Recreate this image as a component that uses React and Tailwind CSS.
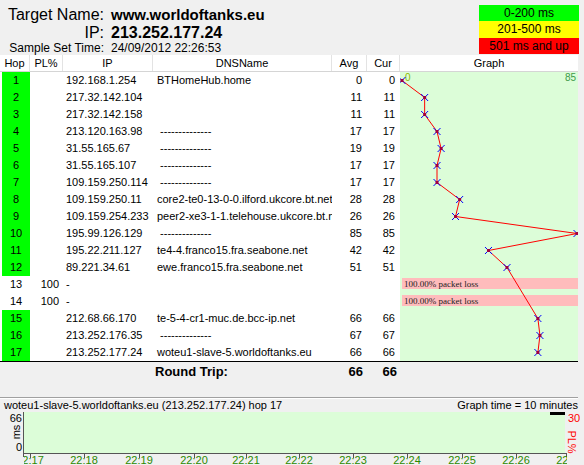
import React from "react";

const hops = [
  { hop: 1, ip: "192.168.1.254", dns: "BTHomeHub.home", avg: 0, cur: 0 },
  { hop: 2, ip: "217.32.142.104", dns: "", avg: 11, cur: 11 },
  { hop: 3, ip: "217.32.142.158", dns: "", avg: 11, cur: 11 },
  { hop: 4, ip: "213.120.163.98", dns: " --------------", avg: 17, cur: 17 },
  { hop: 5, ip: "31.55.165.67", dns: " --------------", avg: 19, cur: 19 },
  { hop: 6, ip: "31.55.165.107", dns: " --------------", avg: 17, cur: 17 },
  { hop: 7, ip: "109.159.250.114", dns: " --------------", avg: 17, cur: 17 },
  { hop: 8, ip: "109.159.250.11", dns: "core2-te0-13-0-0.ilford.ukcore.bt.net", avg: 28, cur: 28 },
  { hop: 9, ip: "109.159.254.233", dns: "peer2-xe3-1-1.telehouse.ukcore.bt.net", avg: 26, cur: 26 },
  { hop: 10, ip: "195.99.126.129", dns: " --------------", avg: 85, cur: 85 },
  { hop: 11, ip: "195.22.211.127", dns: "te4-4.franco15.fra.seabone.net", avg: 42, cur: 42 },
  { hop: 12, ip: "89.221.34.61", dns: "ewe.franco15.fra.seabone.net", avg: 51, cur: 51 },
  { hop: 13, pl: 100, ip: "-", dns: "", loss: true },
  { hop: 14, pl: 100, ip: "-", dns: "", loss: true },
  { hop: 15, ip: "212.68.66.170", dns: "te-5-4-cr1-muc.de.bcc-ip.net", avg: 66, cur: 66 },
  { hop: 16, ip: "213.252.176.35", dns: " --------------", avg: 67, cur: 67 },
  { hop: 17, ip: "213.252.177.24", dns: "woteu1-slave-5.worldoftanks.eu", avg: 66, cur: 66 },
];

const ROW = 17;
const px = (v) => 2 + (v * 175) / 85;

const HopGraph = () => {
  const pts = hops
    .map((h, i) => (h.loss ? null : [px(h.cur), 8.5 + i * ROW]))
    .filter(Boolean);
  return (
    <svg width="178" height={hops.length * ROW} className="block bg-[#dcfdd8]">
      <text x="5" y="9" fontSize="10" fill="#8cb800" fontFamily="Liberation Sans, sans-serif">0</text>
      <text x="176" y="9" fontSize="10" fill="#3d9a4a" textAnchor="end" fontFamily="Liberation Sans, sans-serif">85</text>
      {hops.map((h, i) =>
        h.loss ? (
          <g key={i}>
            <rect x="2" y={i * ROW + 2} width="176" height="11" fill="#ffbcbc" />
            <text x="4" y={i * ROW + 11} fontSize="9" fill="#222" fontFamily="Liberation Serif, serif">
              100.00% packet loss
            </text>
          </g>
        ) : null
      )}
      <polyline points={pts.map((p) => p.join(",")).join(" ")} fill="none" stroke="#ff0000" strokeWidth="1" />
      {pts.map(([x, y], i) => (
        <g key={i}>
          <path d={`M${x - 3.5} ${y - 3.5}L${x + 3.5} ${y + 3.5}M${x + 3.5} ${y - 3.5}L${x - 3.5} ${y + 3.5}`} stroke="#0000ff" strokeWidth="1" />
          <rect x={x - 1.5} y={y - 1.5} width="3" height="3" fill="#a00040" />
        </g>
      ))}
    </svg>
  );
};

const ticks = [30, 84, 139, 194, 246, 299, 353, 407, 462, 516, 570];

const TimeChart = () => (
  <svg width="584" height="54" className="block" fontFamily="Liberation Sans, sans-serif">
    <defs>
      <clipPath id="axisclip">
        <rect x="24" y="40" width="543" height="14" />
      </clipPath>
    </defs>
    <rect x="24" y="0" width="541" height="41" fill="#dcfdd8" />
    <rect x="550" y="0" width="15" height="3" fill="#000" />
    <line x1="23.5" y1="0" x2="23.5" y2="45" stroke="#555" />
    <line x1="23" y1="41.5" x2="566" y2="41.5" stroke="#555" />
    <line x1="566.5" y1="41" x2="566.5" y2="45" stroke="#555" />
    <text x="22" y="10" fontSize="11" textAnchor="end" fill="#000">66</text>
    <text x="22" y="39" fontSize="11" textAnchor="end" fill="#000">0</text>
    <text x="0" y="0" fontSize="11" fill="#000" textAnchor="middle" transform="translate(20 20) rotate(-90)">ms</text>
    <text x="568" y="10" fontSize="11" fill="#ff0000">30</text>
    <text x="0" y="0" fontSize="11" fill="#ff0000" textAnchor="middle" transform="translate(568 30) rotate(90)">PL%</text>
    <g clipPath="url(#axisclip)">
      {ticks.map((t, i) => (
        <g key={t}>
          <line x1={t + 0.5} y1="41" x2={t + 0.5} y2="46" stroke="#555" />
          <text x={t} y="52" fontSize="11" textAnchor="middle" fill="#2a8a00">{`22:${17 + i}`}</text>
        </g>
      ))}
    </g>
  </svg>
);

export default function App() {
  return (
    <div className="w-[584px] h-[465px] overflow-hidden bg-[#f0f0f0] text-black font-['Liberation_Sans',sans-serif]">
      {/* top info */}
      <div className="flex h-[55px]">
        <div className="grid grid-cols-[104px_auto] gap-x-[7px] pt-[5px] items-center content-start">
          <div className="text-right text-[16px] leading-[19px]">Target Name:</div>
          <div className="font-bold text-[15px] leading-[19px]">www.worldoftanks.eu</div>
          <div className="text-right text-[16px] leading-[18px]">IP:</div>
          <div className="font-bold text-[16px] leading-[18px]">213.252.177.24</div>
          <div className="text-right text-[12px] leading-[13px]">Sample Set Time:</div>
          <div className="text-[12px] leading-[13px]">24/09/2012 22:26:53</div>
        </div>
        <div className="ml-auto mr-[5px] mt-[5px] w-[100px] text-[12px] text-center">
          <div className="h-[16px] leading-[16px] bg-[#00ff00]">0-200 ms</div>
          <div className="h-[17px] leading-[17px] bg-[#ffff00]">201-500 ms</div>
          <div className="h-[16px] leading-[16px] bg-[#ff0000]">501 ms and up</div>
        </div>
      </div>

      {/* table */}
      <div className="w-[578px] border-b border-black">
        <div className="flex h-[17px] bg-white border-b border-[#d5d5d5] text-[11px] leading-[16px] text-center">
          <div className="w-[30px] border-r border-[#e3e3e3]">Hop</div>
          <div className="w-[33px] border-r border-[#e3e3e3]">PL%</div>
          <div className="w-[90px] border-r border-[#e3e3e3]">IP</div>
          <div className="w-[179px] border-r border-[#e3e3e3]">DNSName</div>
          <div className="w-[35px] border-r border-[#e3e3e3]">Avg</div>
          <div className="w-[33px] border-r border-[#e3e3e3]">Cur</div>
          <div className="flex-1">Graph</div>
        </div>
        <div className="flex">
          <div className="w-[400px] bg-white text-[11px]">
            {hops.map((h) => (
              <div key={h.hop} className="flex h-[17px] leading-[17px]">
                <div className="w-[30px] pl-[2px]">
                  <div className={`h-full text-center ${h.loss ? "" : "bg-[#00ff00]"}`}>{h.hop}</div>
                </div>
                <div className="w-[33px] text-right pr-[4px]">{h.pl ?? ""}</div>
                <div className="w-[90px] pl-[3px] whitespace-nowrap overflow-hidden">{h.ip}</div>
                <div className="w-[179px] pl-[4px] whitespace-pre overflow-hidden">{h.dns}</div>
                <div className="w-[35px] text-right pr-[5px]">{h.avg ?? ""}</div>
                <div className="w-[33px] text-right pr-[5px]">{h.cur ?? ""}</div>
              </div>
            ))}
          </div>
          <HopGraph />
        </div>
      </div>

      {/* round trip */}
      <div className="flex h-[35px] pt-[1px] text-[13px] font-bold leading-[18px]">
        <div className="w-[153px]" />
        <div className="w-[179px] pl-[2px]">Round Trip:</div>
        <div className="w-[35px] text-right pr-[4px]">66</div>
        <div className="w-[33px] text-right pr-[3px]">66</div>
      </div>

      {/* divider */}
      <div className="w-[578px] border-t border-[#a0a0a0] border-b border-b-white" />

      {/* bottom chart */}
      <div className="flex h-[13px] items-center px-[4px] w-[582px] text-[11px] leading-[13px]">
        <span>woteu1-slave-5.worldoftanks.eu (213.252.177.24) hop 17</span>
        <span className="ml-auto">Graph time = 10 minutes</span>
      </div>
      <TimeChart />
    </div>
  );
}
